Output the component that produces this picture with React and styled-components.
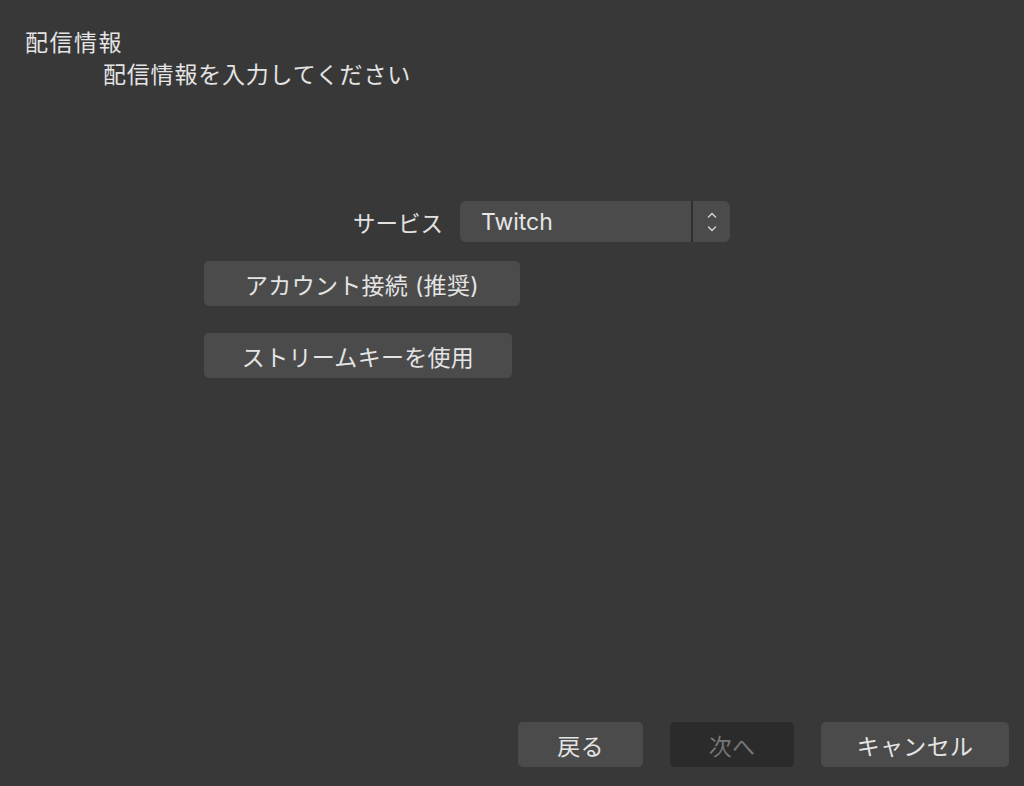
import React from "react";
import styled, { createGlobalStyle } from "styled-components";

const Global = createGlobalStyle`
  html, body { margin: 0; padding: 0; background: #383838; }
  body { font-family: "Inter", "Noto Sans CJK JP", sans-serif; color: #e2e2e2; }
`;

const Window = styled.div`
  height: 786px;
  display: flex;
  flex-direction: column;
  background: #383838;
  box-sizing: border-box;
`;

const Header = styled.header`
  padding: 27px 0 0 25px;
  display: flex;
  flex-direction: column;
`;

const Title = styled.div`
  font-size: 23px;
  line-height: 32px;
  letter-spacing: 1.5px;
  color: #e4e4e4;
`;

const Subtitle = styled.div`
  font-size: 23px;
  line-height: 32px;
  letter-spacing: 0.8px;
  padding-left: 78px;
  color: #e4e4e4;
`;

const Content = styled.main`
  flex: 1;
  display: flex;
  flex-direction: column;
  align-items: flex-start;
  padding: 110px 0 0 204px;
`;

const FormRow = styled.div`
  display: flex;
  align-items: center;
  gap: 17px;
`;

const Label = styled.label`
  width: 239px;
  text-align: right;
  font-size: 22.5px;
  color: #e2e2e2;
`;

const Combo = styled.div`
  width: 270px;
  height: 41px;
  display: flex;
  background: #4b4b4b;
  border-radius: 6px;
  overflow: hidden;
`;

const ComboValue = styled.div`
  flex: 1;
  display: flex;
  align-items: center;
  padding-left: 21px;
  font-size: 23px;
  color: #e6e6e6;
  border-right: 2px solid #2f2f2f;
`;

const ComboArrows = styled.div`
  width: 37px;
  display: flex;
  align-items: center;
  justify-content: center;
`;

const Button = styled.button`
  width: ${(p) => p.$w}px;
  height: 45px;
  margin-top: ${(p) => p.$mt || 0}px;
  border: none;
  border-radius: 5px;
  background: ${(p) => (p.$disabled ? "#2b2b2b" : "#4b4b4b")};
  color: ${(p) => (p.$disabled ? "#767676" : "#e4e4e4")};
  font-family: "Inter", "Noto Sans CJK JP", sans-serif;
  font-size: 23px;
  letter-spacing: 0.3px;
  padding: 0;
  display: flex;
  align-items: center;
  justify-content: center;
`;

const Footer = styled.footer`
  display: flex;
  justify-content: flex-end;
  gap: 27px;
  padding: 0 15px 19px 0;
`;

export default function App() {
  return (
    <>
      <Global />
      <Window>
        <Header>
          <Title>配信情報</Title>
          <Subtitle>配信情報を入力してください</Subtitle>
        </Header>
        <Content>
          <FormRow>
            <Label>サービス</Label>
            <Combo>
              <ComboValue>Twitch</ComboValue>
              <ComboArrows>
                <svg width="10" height="22" viewBox="0 0 10 22" fill="none" stroke="#d0d0d0" strokeWidth="1.5" strokeLinecap="round" strokeLinejoin="round">
                  <path d="M1.5 6 L5 2.5 L8.5 6" />
                  <path d="M1.5 16 L5 19.5 L8.5 16" />
                </svg>
              </ComboArrows>
            </Combo>
          </FormRow>
          <Button $w={316} $mt={19}>アカウント接続 (推奨)</Button>
          <Button $w={308} $mt={27}>ストリームキーを使用</Button>
        </Content>
        <Footer>
          <Button $w={125}>戻る</Button>
          <Button $w={124} $disabled>次へ</Button>
          <Button $w={188}>キャンセル</Button>
        </Footer>
      </Window>
    </>
  );
}
